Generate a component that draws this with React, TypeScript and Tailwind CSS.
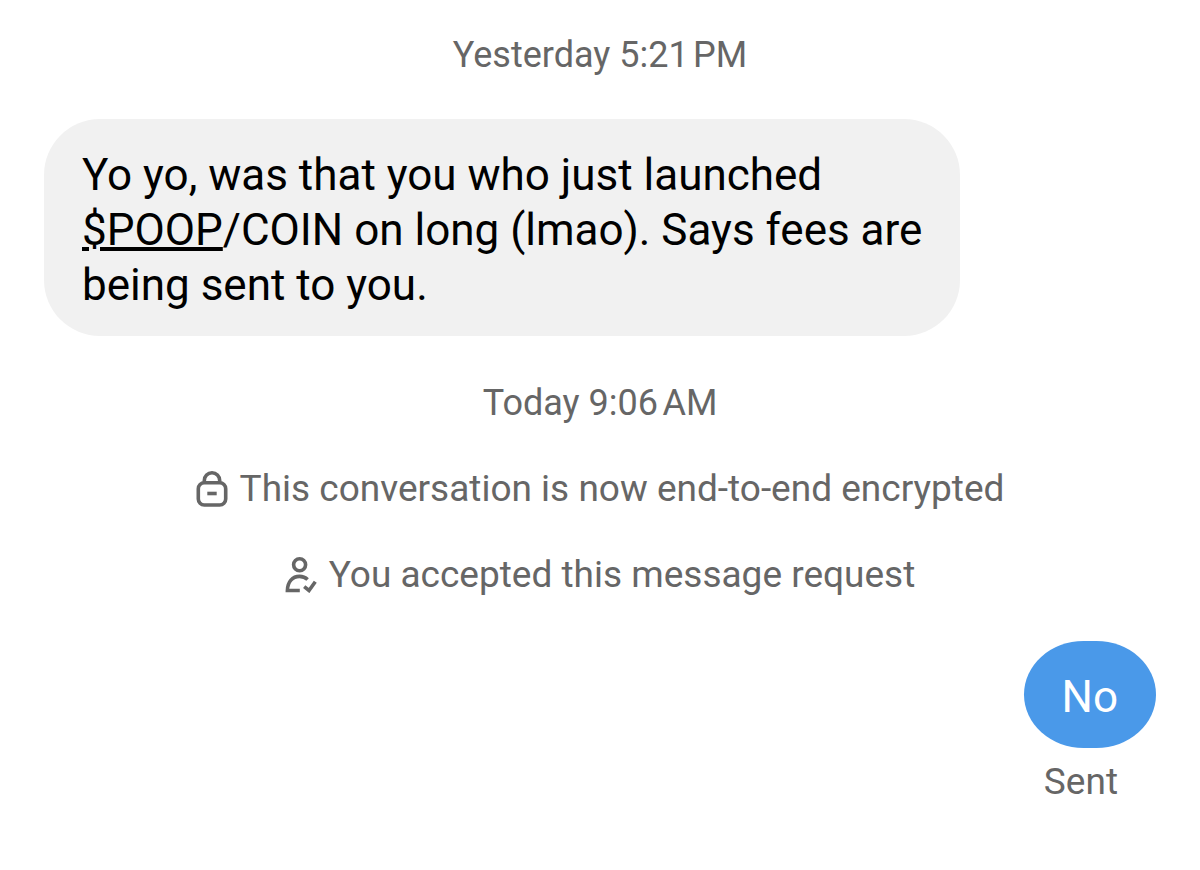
import React, { ReactNode } from "react";

const LockIcon = () => (
  <svg
    className="w-8 h-9 shrink-0"
    viewBox="0 0 32 36"
    fill="none"
    stroke="currentColor"
    strokeWidth="3.6"
    aria-hidden="true"
  >
    <rect x="2.3" y="11.8" width="27.4" height="22.2" rx="6" />
    <path d="M8.300 11.500V9.500a7.700 7.700 0 0 1 15.400 0v2" />
    <path d="M11.300 22.500h9.400" />
  </svg>
);

const PersonCheckIcon = () => (
  <svg
    className="w-8 h-9 shrink-0"
    viewBox="0 0 32 36"
    fill="none"
    stroke="currentColor"
    strokeWidth="3.6"
    aria-hidden="true"
  >
    <circle cx="14.6" cy="7.8" r="6" />
    <path d="M14.800 33.500H2.400C2.600 24.800 7.500 19.400 14.500 19.400c3.300 0 6 1.100 8.100 3.100" />
    <path d="M19.200 29.600l4.800 3.900L30.300 24.700" />
  </svg>
);

const Timestamp = ({ children }: { children: ReactNode }) => (
  <div className="text-center text-[36px] leading-[44px] text-[#666666]">
    {children}
  </div>
);

const Notice = ({ icon, text }: { icon: ReactNode; text: string }) => (
  <div className="flex justify-center items-center gap-3 text-[37px] leading-[44px] text-[#666666]">
    {icon}
    <span>{text}</span>
  </div>
);

const App = () => {
  return (
    <main className="flex flex-col min-h-screen bg-white px-11 pt-[33px] pb-8 font-['Roboto',sans-serif]">
      <Timestamp>Yesterday 5:21{"\u202f"}PM</Timestamp>
      <div className="self-start mt-[42px] px-[38px] pt-[29px] pb-[23px] rounded-[56px] bg-[#f1f1f1] text-black text-[44px] leading-[55px]">
        Yo yo, was that you who just launched
        <br />
        <a href="#poop" className="underline decoration-4 underline-offset-2">
          $POOP
        </a>
        /COIN on long (lmao). Says fees are
        <br />
        being sent to you.
      </div>
      <div className="flex flex-col gap-[42px] mt-[45px]">
        <Timestamp>Today 9:06{"\u202f"}AM</Timestamp>
        <Notice
          icon={<LockIcon />}
          text="This conversation is now end-to-end encrypted"
        />
        <Notice
          icon={<PersonCheckIcon />}
          text="You accepted this message request"
        />
      </div>
      <div className="self-end mt-11 px-[38px] pt-[29px] pb-[23px] rounded-[60px/54px] bg-[#4a99e9] text-white text-[44px] leading-[55px]">
        No
      </div>
      <div className="self-end mt-3 px-[38px] text-[37px] leading-[44px] text-[#666666]">
        Sent
      </div>
    </main>
  );
};
export default App;
